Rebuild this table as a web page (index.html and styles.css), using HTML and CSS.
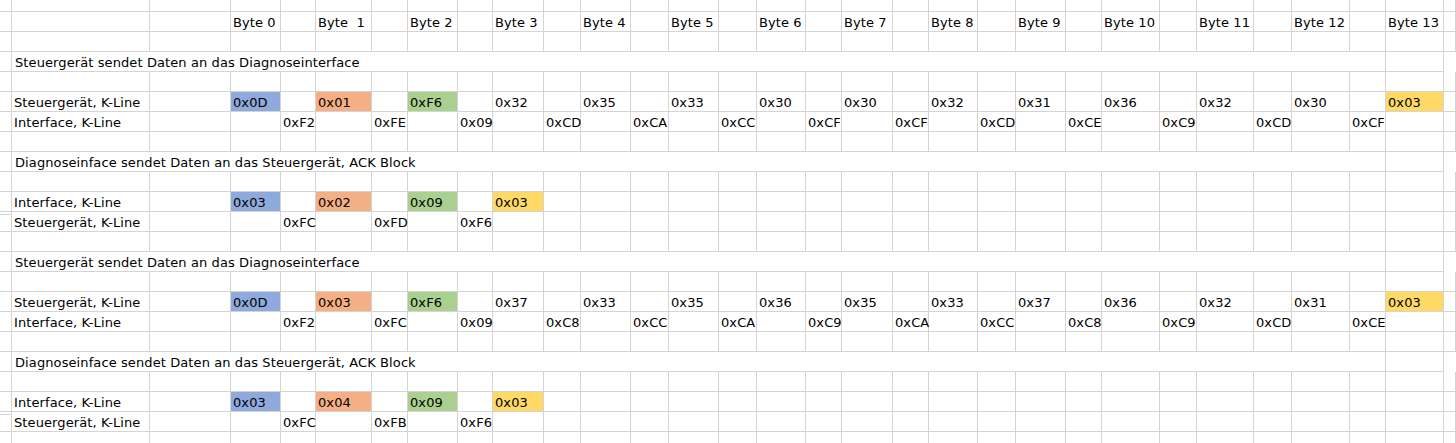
FILE: index.html
```html
<!DOCTYPE html>
<html lang="de">
<head>
<meta charset="utf-8">
<title>K-Line Protokoll</title>
<link rel="stylesheet" href="styles.css">
</head>
<body>
<div class="sheet">
  <div class="row top">
    <div class="c"></div><div class="c"></div><div class="c"></div><div class="c"></div><div class="c"></div><div class="c"></div><div class="c"></div><div class="c"></div><div class="c"></div><div class="c"></div><div class="c"></div><div class="c"></div><div class="c"></div><div class="c"></div><div class="c"></div><div class="c"></div><div class="c"></div><div class="c"></div><div class="c"></div><div class="c"></div><div class="c"></div><div class="c"></div><div class="c"></div><div class="c"></div><div class="c"></div><div class="c"></div><div class="c"></div><div class="c"></div><div class="c"></div><div class="c"></div><div class="c"></div>
  </div>
  <div class="row">
    <div class="c"></div><div class="c"></div><div class="c"></div>
    <div class="c">Byte 0</div><div class="c"></div>
    <div class="c">Byte&nbsp; 1</div><div class="c"></div>
    <div class="c">Byte 2</div><div class="c"></div>
    <div class="c">Byte 3</div><div class="c"></div>
    <div class="c">Byte 4</div><div class="c"></div>
    <div class="c">Byte 5</div><div class="c"></div>
    <div class="c">Byte 6</div><div class="c"></div>
    <div class="c">Byte 7</div><div class="c"></div>
    <div class="c">Byte 8</div><div class="c"></div>
    <div class="c">Byte 9</div><div class="c"></div>
    <div class="c">Byte 10</div><div class="c"></div>
    <div class="c">Byte 11</div><div class="c"></div>
    <div class="c">Byte 12</div><div class="c"></div>
    <div class="c">Byte 13</div><div class="c"></div>
  </div>
  <div class="row">
    <div class="c"></div><div class="c"></div><div class="c"></div><div class="c"></div><div class="c"></div><div class="c"></div><div class="c"></div><div class="c"></div><div class="c"></div><div class="c"></div><div class="c"></div><div class="c"></div><div class="c"></div><div class="c"></div><div class="c"></div><div class="c"></div><div class="c"></div><div class="c"></div><div class="c"></div><div class="c"></div><div class="c"></div><div class="c"></div><div class="c"></div><div class="c"></div><div class="c"></div><div class="c"></div><div class="c"></div><div class="c"></div><div class="c"></div><div class="c"></div><div class="c"></div>
  </div>

  <!-- Block 1 -->
  <div class="row">
    <div class="c"></div><div class="c title">Steuergerät sendet Daten an das Diagnoseinterface</div><div class="c"></div>
  </div>
  <div class="row">
    <div class="c"></div><div class="c"></div><div class="c"></div><div class="c"></div><div class="c"></div><div class="c"></div><div class="c"></div><div class="c"></div><div class="c"></div><div class="c"></div><div class="c"></div><div class="c"></div><div class="c"></div><div class="c"></div><div class="c"></div><div class="c"></div><div class="c"></div><div class="c"></div><div class="c"></div><div class="c"></div><div class="c"></div><div class="c"></div><div class="c"></div><div class="c"></div><div class="c"></div><div class="c"></div><div class="c"></div><div class="c"></div><div class="c"></div><div class="c"></div><div class="c"></div>
  </div>
  <div class="row">
    <div class="c"></div><div class="c">Steuergerät, K-Line</div><div class="c"></div>
    <div class="c blue">0x0D</div><div class="c"></div>
    <div class="c orange">0x01</div><div class="c"></div>
    <div class="c green">0xF6</div><div class="c"></div>
    <div class="c">0x32</div><div class="c"></div>
    <div class="c">0x35</div><div class="c"></div>
    <div class="c">0x33</div><div class="c"></div>
    <div class="c">0x30</div><div class="c"></div>
    <div class="c">0x30</div><div class="c"></div>
    <div class="c">0x32</div><div class="c"></div>
    <div class="c">0x31</div><div class="c"></div>
    <div class="c">0x36</div><div class="c"></div>
    <div class="c">0x32</div><div class="c"></div>
    <div class="c">0x30</div><div class="c"></div>
    <div class="c yellow">0x03</div><div class="c"></div>
  </div>
  <div class="row">
    <div class="c"></div><div class="c">Interface, K-Line</div><div class="c"></div>
    <div class="c"></div><div class="c">0xF2</div>
    <div class="c"></div><div class="c">0xFE</div>
    <div class="c"></div><div class="c">0x09</div>
    <div class="c"></div><div class="c">0xCD</div>
    <div class="c"></div><div class="c">0xCA</div>
    <div class="c"></div><div class="c">0xCC</div>
    <div class="c"></div><div class="c">0xCF</div>
    <div class="c"></div><div class="c">0xCF</div>
    <div class="c"></div><div class="c">0xCD</div>
    <div class="c"></div><div class="c">0xCE</div>
    <div class="c"></div><div class="c">0xC9</div>
    <div class="c"></div><div class="c">0xCD</div>
    <div class="c"></div><div class="c">0xCF</div>
    <div class="c"></div><div class="c"></div>
  </div>
  <div class="row">
    <div class="c"></div><div class="c"></div><div class="c"></div><div class="c"></div><div class="c"></div><div class="c"></div><div class="c"></div><div class="c"></div><div class="c"></div><div class="c"></div><div class="c"></div><div class="c"></div><div class="c"></div><div class="c"></div><div class="c"></div><div class="c"></div><div class="c"></div><div class="c"></div><div class="c"></div><div class="c"></div><div class="c"></div><div class="c"></div><div class="c"></div><div class="c"></div><div class="c"></div><div class="c"></div><div class="c"></div><div class="c"></div><div class="c"></div><div class="c"></div><div class="c"></div>
  </div>

  <!-- Block 2 -->
  <div class="row">
    <div class="c"></div><div class="c title">Diagnoseinface sendet Daten an das Steuergerät, ACK Block</div><div class="c"></div>
  </div>
  <div class="row">
    <div class="c"></div><div class="c"></div><div class="c"></div><div class="c"></div><div class="c"></div><div class="c"></div><div class="c"></div><div class="c"></div><div class="c"></div><div class="c"></div><div class="c"></div><div class="c"></div><div class="c"></div><div class="c"></div><div class="c"></div><div class="c"></div><div class="c"></div><div class="c"></div><div class="c"></div><div class="c"></div><div class="c"></div><div class="c"></div><div class="c"></div><div class="c"></div><div class="c"></div><div class="c"></div><div class="c"></div><div class="c"></div><div class="c"></div><div class="c"></div><div class="c"></div>
  </div>
  <div class="row">
    <div class="c"></div><div class="c">Interface, K-Line</div><div class="c"></div>
    <div class="c blue">0x03</div><div class="c"></div>
    <div class="c orange">0x02</div><div class="c"></div>
    <div class="c green">0x09</div><div class="c"></div>
    <div class="c yellow">0x03</div><div class="c"></div>
    <div class="c"></div><div class="c"></div><div class="c"></div><div class="c"></div><div class="c"></div><div class="c"></div><div class="c"></div><div class="c"></div><div class="c"></div><div class="c"></div><div class="c"></div><div class="c"></div><div class="c"></div><div class="c"></div><div class="c"></div><div class="c"></div><div class="c"></div><div class="c"></div><div class="c"></div><div class="c"></div><div class="c"></div>
  </div>
  <div class="row">
    <div class="c"></div><div class="c">Steuergerät, K-Line</div><div class="c"></div>
    <div class="c"></div><div class="c">0xFC</div>
    <div class="c"></div><div class="c">0xFD</div>
    <div class="c"></div><div class="c">0xF6</div>
    <div class="c"></div><div class="c"></div><div class="c"></div><div class="c"></div><div class="c"></div><div class="c"></div><div class="c"></div><div class="c"></div><div class="c"></div><div class="c"></div><div class="c"></div><div class="c"></div><div class="c"></div><div class="c"></div><div class="c"></div><div class="c"></div><div class="c"></div><div class="c"></div><div class="c"></div><div class="c"></div><div class="c"></div><div class="c"></div>
  </div>
  <div class="row">
    <div class="c"></div><div class="c"></div><div class="c"></div><div class="c"></div><div class="c"></div><div class="c"></div><div class="c"></div><div class="c"></div><div class="c"></div><div class="c"></div><div class="c"></div><div class="c"></div><div class="c"></div><div class="c"></div><div class="c"></div><div class="c"></div><div class="c"></div><div class="c"></div><div class="c"></div><div class="c"></div><div class="c"></div><div class="c"></div><div class="c"></div><div class="c"></div><div class="c"></div><div class="c"></div><div class="c"></div><div class="c"></div><div class="c"></div><div class="c"></div><div class="c"></div>
  </div>

  <!-- Block 3 -->
  <div class="row">
    <div class="c"></div><div class="c title">Steuergerät sendet Daten an das Diagnoseinterface</div><div class="c"></div>
  </div>
  <div class="row">
    <div class="c"></div><div class="c"></div><div class="c"></div><div class="c"></div><div class="c"></div><div class="c"></div><div class="c"></div><div class="c"></div><div class="c"></div><div class="c"></div><div class="c"></div><div class="c"></div><div class="c"></div><div class="c"></div><div class="c"></div><div class="c"></div><div class="c"></div><div class="c"></div><div class="c"></div><div class="c"></div><div class="c"></div><div class="c"></div><div class="c"></div><div class="c"></div><div class="c"></div><div class="c"></div><div class="c"></div><div class="c"></div><div class="c"></div><div class="c"></div><div class="c"></div>
  </div>
  <div class="row">
    <div class="c"></div><div class="c">Steuergerät, K-Line</div><div class="c"></div>
    <div class="c blue">0x0D</div><div class="c"></div>
    <div class="c orange">0x03</div><div class="c"></div>
    <div class="c green">0xF6</div><div class="c"></div>
    <div class="c">0x37</div><div class="c"></div>
    <div class="c">0x33</div><div class="c"></div>
    <div class="c">0x35</div><div class="c"></div>
    <div class="c">0x36</div><div class="c"></div>
    <div class="c">0x35</div><div class="c"></div>
    <div class="c">0x33</div><div class="c"></div>
    <div class="c">0x37</div><div class="c"></div>
    <div class="c">0x36</div><div class="c"></div>
    <div class="c">0x32</div><div class="c"></div>
    <div class="c">0x31</div><div class="c"></div>
    <div class="c yellow">0x03</div><div class="c"></div>
  </div>
  <div class="row">
    <div class="c"></div><div class="c">Interface, K-Line</div><div class="c"></div>
    <div class="c"></div><div class="c">0xF2</div>
    <div class="c"></div><div class="c">0xFC</div>
    <div class="c"></div><div class="c">0x09</div>
    <div class="c"></div><div class="c">0xC8</div>
    <div class="c"></div><div class="c">0xCC</div>
    <div class="c"></div><div class="c">0xCA</div>
    <div class="c"></div><div class="c">0xC9</div>
    <div class="c"></div><div class="c">0xCA</div>
    <div class="c"></div><div class="c">0xCC</div>
    <div class="c"></div><div class="c">0xC8</div>
    <div class="c"></div><div class="c">0xC9</div>
    <div class="c"></div><div class="c">0xCD</div>
    <div class="c"></div><div class="c">0xCE</div>
    <div class="c"></div><div class="c"></div>
  </div>
  <div class="row">
    <div class="c"></div><div class="c"></div><div class="c"></div><div class="c"></div><div class="c"></div><div class="c"></div><div class="c"></div><div class="c"></div><div class="c"></div><div class="c"></div><div class="c"></div><div class="c"></div><div class="c"></div><div class="c"></div><div class="c"></div><div class="c"></div><div class="c"></div><div class="c"></div><div class="c"></div><div class="c"></div><div class="c"></div><div class="c"></div><div class="c"></div><div class="c"></div><div class="c"></div><div class="c"></div><div class="c"></div><div class="c"></div><div class="c"></div><div class="c"></div><div class="c"></div>
  </div>

  <!-- Block 4 -->
  <div class="row">
    <div class="c"></div><div class="c title">Diagnoseinface sendet Daten an das Steuergerät, ACK Block</div><div class="c"></div>
  </div>
  <div class="row">
    <div class="c"></div><div class="c"></div><div class="c"></div><div class="c"></div><div class="c"></div><div class="c"></div><div class="c"></div><div class="c"></div><div class="c"></div><div class="c"></div><div class="c"></div><div class="c"></div><div class="c"></div><div class="c"></div><div class="c"></div><div class="c"></div><div class="c"></div><div class="c"></div><div class="c"></div><div class="c"></div><div class="c"></div><div class="c"></div><div class="c"></div><div class="c"></div><div class="c"></div><div class="c"></div><div class="c"></div><div class="c"></div><div class="c"></div><div class="c"></div><div class="c"></div>
  </div>
  <div class="row">
    <div class="c"></div><div class="c">Interface, K-Line</div><div class="c"></div>
    <div class="c blue">0x03</div><div class="c"></div>
    <div class="c orange">0x04</div><div class="c"></div>
    <div class="c green">0x09</div><div class="c"></div>
    <div class="c yellow">0x03</div><div class="c"></div>
    <div class="c"></div><div class="c"></div><div class="c"></div><div class="c"></div><div class="c"></div><div class="c"></div><div class="c"></div><div class="c"></div><div class="c"></div><div class="c"></div><div class="c"></div><div class="c"></div><div class="c"></div><div class="c"></div><div class="c"></div><div class="c"></div><div class="c"></div><div class="c"></div><div class="c"></div><div class="c"></div><div class="c"></div>
  </div>
  <div class="row">
    <div class="c"></div><div class="c">Steuergerät, K-Line</div><div class="c"></div>
    <div class="c"></div><div class="c">0xFC</div>
    <div class="c"></div><div class="c">0xFB</div>
    <div class="c"></div><div class="c">0xF6</div>
    <div class="c"></div><div class="c"></div><div class="c"></div><div class="c"></div><div class="c"></div><div class="c"></div><div class="c"></div><div class="c"></div><div class="c"></div><div class="c"></div><div class="c"></div><div class="c"></div><div class="c"></div><div class="c"></div><div class="c"></div><div class="c"></div><div class="c"></div><div class="c"></div><div class="c"></div><div class="c"></div><div class="c"></div><div class="c"></div>
  </div>
  <div class="row">
    <div class="c"></div><div class="c"></div><div class="c"></div><div class="c"></div><div class="c"></div><div class="c"></div><div class="c"></div><div class="c"></div><div class="c"></div><div class="c"></div><div class="c"></div><div class="c"></div><div class="c"></div><div class="c"></div><div class="c"></div><div class="c"></div><div class="c"></div><div class="c"></div><div class="c"></div><div class="c"></div><div class="c"></div><div class="c"></div><div class="c"></div><div class="c"></div><div class="c"></div><div class="c"></div><div class="c"></div><div class="c"></div><div class="c"></div><div class="c"></div><div class="c"></div>
  </div>
</div>
</body>
</html>
```

FILE: styles.css
```css
html, body {
  margin: 0;
  padding: 0;
  background: #ffffff;
  overflow: hidden;
}

.sheet {
  --cols: 12px 138px 81px 50px 35px 56px 36px 50px 35px 51px 37px 50px 38px 50px 38px 49px 36px 51px 36px 49px 38px 50px 36px 58px 37px 57px 38px 58px 36px 58px 1fr;
  width: 1456px;
  height: 443px;
  overflow: hidden;
  font-family: "DejaVu Sans", Verdana, sans-serif;
  font-size: 13px;
  letter-spacing: 0.1px;
  color: #000000;
}

.row {
  display: grid;
  grid-template-columns: var(--cols);
  height: 20px;
}

.row.top {
  height: 12px;
}

.c {
  box-sizing: border-box;
  border-right: 1px solid #d4d4d4;
  border-bottom: 1px solid #d4d4d4;
  padding: 2px 0 0 2px;
  line-height: 17px;
  white-space: nowrap;
  min-width: 0;
}

.title {
  grid-column: span 28;
  padding-left: 3px;
}

.blue { background: #8ea9db; }
.orange { background: #f4b084; }
.green { background: #a9d08e; }
.yellow { background: #ffd966; }
```
